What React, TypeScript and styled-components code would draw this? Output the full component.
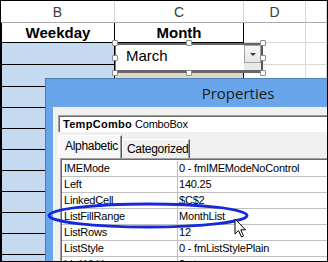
import React from "react";
import styled, { createGlobalStyle, css } from "styled-components";

const GlobalStyle = createGlobalStyle`
  html, body { margin: 0; padding: 0; background: #fff; }
  * { box-sizing: border-box; }
`;

const Frame = styled.div`
  position: relative;
  width: 328px;
  height: 262px;
  overflow: hidden;
  background: #fff;
  border: 1px solid #000;
  font-family: "Liberation Sans", Arial, sans-serif;
`;

// ---- worksheet ----
const Sheet = styled.div`
  display: grid;
  grid-template-columns: 114px 129px 62px 1fr;
  grid-template-rows: 22px 20px 22px 22px;
  grid-auto-rows: 21px;
`;

const HeadCell = styled.div`
  display: flex;
  align-items: center;
  justify-content: center;
  border-right: 1px solid #d4d4d4;
  border-bottom: 1px solid #a8a8a8;
  font-size: 14px;
  color: #3c3c3c;
`;

type CellKind = "title" | "blue" | "tan" | "plain";

const Cell = styled.div<{ $kind: CellKind; $first?: boolean }>`
  display: flex;
  align-items: center;
  justify-content: center;
  ${({ $kind }) =>
    $kind === "plain"
      ? css`
          border-right: 1px solid #d9d9d9;
          border-bottom: 1px solid #d9d9d9;
        `
      : css`
          border-right: 1px solid #000;
          border-bottom: 1px solid #000;
        `}
  ${({ $first }) => $first && css`border-left: 1px solid #000;`}
  ${({ $kind }) => $kind === "blue" && css`background: #c5d9f1;`}
  ${({ $kind }) => $kind === "tan" && css`background: #ddd9c4;`}
  ${({ $kind }) =>
    $kind === "title" &&
    css`
      font-weight: bold;
      font-size: 15px;
      color: #000;
    `}
`;

// ---- ActiveX combo on the sheet ----
const Control = styled.div`
  position: absolute;
  left: 114px;
  top: 42px;
  width: 148px;
  height: 30px;
`;

const ComboField = styled.div`
  display: flex;
  height: 100%;
  background: #fff;
  border-left: 1px solid #7a7a7a;
  border-top: 2px solid #666;
  border-right: 2px solid #555;
  border-bottom: 3px solid #666;
`;

const ComboText = styled.div`
  flex: 1;
  padding: 2px 0 0 10px;
  font-size: 15px;
  line-height: 18px;
  color: #000;
`;

const ButtonColumn = styled.div`
  width: 17px;
  display: flex;
  flex-direction: column;
  background: #e8e8e8;
`;

const DropButton = styled.div`
  height: 18px;
  display: flex;
  align-items: center;
  justify-content: center;
  border: 1px solid #a3a3a3;
  background: linear-gradient(#f7f7f7, #e6e6e6);
`;

const Arrow = styled.div`
  width: 0;
  height: 0;
  border-left: 3px solid transparent;
  border-right: 3px solid transparent;
  border-top: 3px solid #3a3a3a;
`;

const Handle = styled.div<{ $x: number; $y: number }>`
  position: absolute;
  left: ${({ $x }) => $x}%;
  top: ${({ $y }) => $y}%;
  width: 6px;
  height: 6px;
  transform: translate(-50%, -50%);
  background: #fff;
  border: 1px solid #8a8a8a;
  border-radius: 1px;
`;

// ---- Properties window ----
const Dialog = styled.div`
  position: absolute;
  left: 44px;
  top: 77px;
  width: 385px;
  height: 220px;
  display: flex;
  flex-direction: column;
  background: #68a5ea;
  border-left: 1px solid #4d7fb8;
  border-top: 1px solid #4d7fb8;
`;

const TitleBar = styled.div`
  flex: none;
  height: 28px;
  display: flex;
  align-items: center;
  justify-content: center;
  font-family: "Open Sans", "Noto Sans", sans-serif;
  font-size: 15px;
  color: #1b1b1b;
`;

const Body = styled.div`
  flex: 1;
  min-height: 0;
  overflow: hidden;
  margin-left: 7px;
  padding: 8px 0 0 4px;
  background: #f0f0f0;
  border-left: 1px solid #fafafa;
  font-size: 11px;
  letter-spacing: -0.2px;
  color: #000;
`;

const ObjectBox = styled.div`
  height: 17px;
  padding: 1px 0 0 4px;
  line-height: 15px;
  background: #fff;
  border-top: 1px solid #a0a0a0;
  border-left: 1px solid #a0a0a0;
  box-shadow: inset 1px 1px 0 #696969;
  white-space: nowrap;
  b { letter-spacing: 0.3px; }
`;

const Tabs = styled.div`
  display: flex;
  align-items: flex-end;
  height: 23px;
  margin-top: 3px;
`;

const Tab = styled.div<{ $active?: boolean; $w: number }>`
  width: ${({ $w }) => $w}px;
  height: ${({ $active }) => ($active ? 23 : 19)}px;
  display: flex;
  align-items: center;
  padding-left: ${({ $active }) => ($active ? 6 : 4)}px;
  padding-bottom: ${({ $active }) => ($active ? 2 : 0)}px;
  background: ${({ $active }) => ($active ? "#f7f7f7" : "#f0f0f0")};
  border-top: 1px solid #fff;
  border-left: 1px solid #fff;
  border-right: 1px solid #555;
  box-shadow: inset -1px 0 0 #a0a0a0;
  font-size: 12px;
  letter-spacing: -0.3px;
`;

const PropGrid = styled.div`
  margin-left: 2px;
  padding-top: 2px;
  background: #fff;
  border-top: 1px solid #a0a0a0;
  border-left: 1px solid #a0a0a0;
  box-shadow: inset 1px 1px 0 #696969;
`;

const PropRow = styled.div`
  display: grid;
  grid-template-columns: 116px 1fr;
  height: 16px;
  margin-left: 1px;
  border-bottom: 1px solid #c0c0c0;
  line-height: 15px;
  white-space: nowrap;
`;

const PropName = styled.div`
  padding-left: 2px;
  border-right: 1px solid #c0c0c0;
`;

const PropValue = styled.div`
  padding-left: 1px;
`;

// ---- annotation ----
const Overlay = styled.svg`
  position: absolute;
  left: -1px;
  top: -1px;
  pointer-events: none;
`;

const Pointer = styled.svg`
  position: absolute;
  left: 233px;
  top: 217px;
`;

const rows = 11;
const handles = [
  [0, 0], [50, 0], [100, 0],
  [0, 50], [100, 50],
  [0, 100], [50, 100], [100, 100],
];

const props: [string, string][] = [
  ["IMEMode", "0 - fmIMEModeNoControl"],
  ["Left", "140.25"],
  ["LinkedCell", "$C$2"],
  ["ListFillRange", "MonthList"],
  ["ListRows", "12"],
  ["ListStyle", "0 - fmListStylePlain"],
  ["ListWidth", "0 pt"],
];

export default function App() {
  return (
    <>
      <GlobalStyle />
      <Frame>
        <Sheet>
          <HeadCell>B</HeadCell>
          <HeadCell>C</HeadCell>
          <HeadCell>D</HeadCell>
          <HeadCell />
          <Cell $kind="title" $first>Weekday</Cell>
          <Cell $kind="title">Month</Cell>
          <Cell $kind="plain" />
          <Cell $kind="plain" />
          {Array.from({ length: rows }).map((_, i) => (
            <React.Fragment key={i}>
              <Cell $kind="blue" $first />
              <Cell $kind="tan" />
              <Cell $kind="plain" />
              <Cell $kind="plain" />
            </React.Fragment>
          ))}
        </Sheet>

        <Control>
          <ComboField>
            <ComboText>March</ComboText>
            <ButtonColumn>
              <DropButton>
                <Arrow />
              </DropButton>
            </ButtonColumn>
          </ComboField>
          {handles.map(([x, y]) => (
            <Handle key={`${x}-${y}`} $x={x} $y={y} />
          ))}
        </Control>

        <Dialog>
          <TitleBar>Properties</TitleBar>
          <Body>
            <ObjectBox>
              <b>TempCombo</b> ComboBox
            </ObjectBox>
            <Tabs>
              <Tab $active $w={64}>Alphabetic</Tab>
              <Tab $w={68}>Categorized</Tab>
            </Tabs>
            <PropGrid>
              {props.map(([name, value]) => (
                <PropRow key={name}>
                  <PropName>{name}</PropName>
                  <PropValue>{value}</PropValue>
                </PropRow>
              ))}
            </PropGrid>
          </Body>
        </Dialog>

        <Overlay width="328" height="262" viewBox="0 0 328 262">
          <ellipse
            cx="148"
            cy="215.5"
            rx="99"
            ry="11.5"
            fill="none"
            stroke="#1428dc"
            strokeWidth="3"
          />
        </Overlay>
        <Pointer width="14" height="21" viewBox="0 0 14 21">
          <path
            d="M1 1 L1 16 L4.5 12.5 L7.5 19 L9.5 18 L6.8 11.8 L11.5 11.8 Z"
            fill="#fff"
            stroke="#000"
            strokeWidth="1"
            strokeLinejoin="miter"
          />
        </Pointer>
      </Frame>
    </>
  );
}
